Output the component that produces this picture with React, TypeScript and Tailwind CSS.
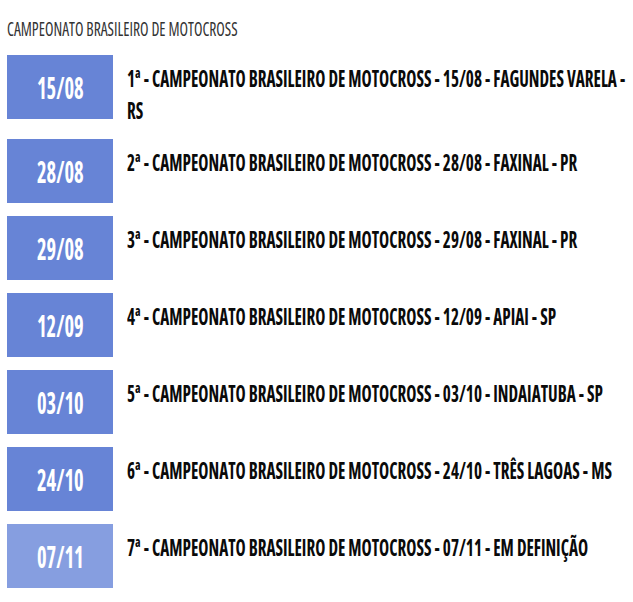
interface Stage {
  date: string
  title: string
  pending?: boolean
}

const stages: Stage[] = [
  { date: "15/08", title: "1ª - CAMPEONATO BRASILEIRO DE MOTOCROSS - 15/08 - FAGUNDES VARELA - RS" },
  { date: "28/08", title: "2ª - CAMPEONATO BRASILEIRO DE MOTOCROSS - 28/08 - FAXINAL - PR" },
  { date: "29/08", title: "3ª - CAMPEONATO BRASILEIRO DE MOTOCROSS - 29/08 - FAXINAL - PR" },
  { date: "12/09", title: "4ª - CAMPEONATO BRASILEIRO DE MOTOCROSS - 12/09 - APIAI - SP" },
  { date: "03/10", title: "5ª - CAMPEONATO BRASILEIRO DE MOTOCROSS - 03/10 - INDAIATUBA - SP" },
  { date: "24/10", title: "6ª - CAMPEONATO BRASILEIRO DE MOTOCROSS - 24/10 - TRÊS LAGOAS - MS" },
  { date: "07/11", title: "7ª - CAMPEONATO BRASILEIRO DE MOTOCROSS - 07/11 - EM DEFINIÇÃO", pending: true },
]

export default function App() {
  return (
    <div className="bg-white px-[7px] font-['Open_Sans',sans-serif] font-stretch-[75%]">
      <div className="pt-[17px] mb-[14px] h-[41px] overflow-visible">
        <div className="w-[122%] origin-left scale-x-[0.82] text-[19px] leading-[24px] text-[#333]">
          CAMPEONATO BRASILEIRO DE MOTOCROSS
        </div>
      </div>

      <div className="flex flex-col gap-[13px]">
        {stages.map((s) => (
          <div key={s.date} className="flex items-start gap-[14px]">
            <div
              className={`w-[106px] h-16 shrink-0 flex items-center justify-center ${
                s.pending ? "bg-[#869ee0]" : "bg-[#6784d6]"
              }`}
            >
              <span className="inline-block scale-x-[0.66] text-[31px] leading-none font-bold text-white">
                {s.date}
              </span>
            </div>
            <div className="flex-1 min-w-0 pt-[7px]">
              <div className="w-[134%] origin-left scale-x-[0.745] text-[23px] leading-[32px] font-bold text-[#0a0a0a]">
                {s.title}
              </div>
            </div>
          </div>
        ))}
      </div>
    </div>
  )
}
